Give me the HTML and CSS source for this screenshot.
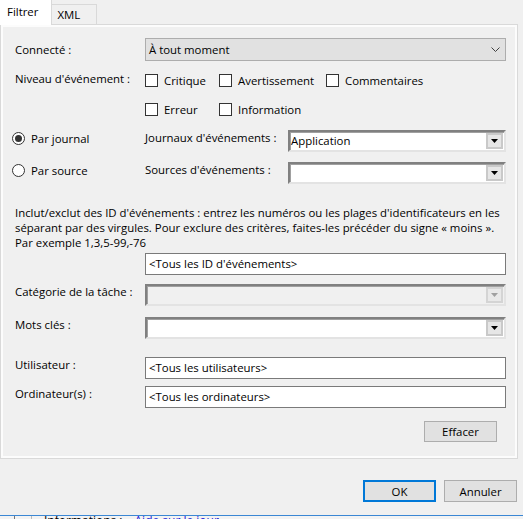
FILE: index.html
```html
<!DOCTYPE html>
<html lang="fr">
<head>
    <meta charset="UTF-8">
    <meta name="viewport" content="width=device-width, initial-scale=1.0">
    <title>Filtrer le journal actuel</title>
    <link rel="stylesheet" href="styles.css">
</head>
<body>
    <div class="dialog">
        <div class="tabs">
            <div class="tab tab-active">Filtrer</div>
            <div class="tab">XML</div>
        </div>

        <div class="tab-panel">
            <div class="page">
                <div class="row row-connect">
                    <span class="field-label">Connecté :</span>
                    <div class="combo-flat">
                        <span>À tout moment</span>
                        <svg class="chevron" width="9" height="5" viewBox="0 0 9 5"><path d="M0.5 0.5 L4.5 4.5 L8.5 0.5" fill="none" stroke="#404040"/></svg>
                    </div>
                </div>

                <div class="row row-levels">
                    <span class="field-label levels-label">Niveau d'événement :</span>
                    <div class="levels">
                        <label class="check"><span class="box"></span>Critique</label>
                        <label class="check"><span class="box"></span>Avertissement</label>
                        <label class="check"><span class="box"></span>Commentaires</label>
                        <label class="check"><span class="box"></span>Erreur</label>
                        <label class="check"><span class="box"></span>Information</label>
                    </div>
                </div>

                <div class="sources">
                    <div class="source-row">
                        <label class="radio"><span class="dot dot-on"></span>Par journal</label>
                        <span class="field-label">Journaux d'événements :</span>
                        <div class="combo">
                            <span class="combo-text">Application</span>
                            <span class="drop"><svg width="7" height="4" viewBox="0 0 7 4"><path d="M0 0h7L3.5 4z" fill="#000"/></svg></span>
                        </div>
                    </div>
                    <div class="source-row">
                        <label class="radio"><span class="dot"></span>Par source</label>
                        <span class="field-label">Sources d'événements :</span>
                        <div class="combo">
                            <span class="combo-text"></span>
                            <span class="drop"><svg width="7" height="4" viewBox="0 0 7 4"><path d="M0 0h7L3.5 4z" fill="#000"/></svg></span>
                        </div>
                    </div>
                </div>

                <p class="hint">Inclut/exclut des ID d'événements : entrez les numéros ou les plages d'identificateurs en les<br>séparant par des virgules. Pour exclure des critères, faites-les précéder du signe « moins ».<br>Par exemple 1,3,5-99,-76</p>

                <div class="row row-ids">
                    <span></span>
                    <div class="textbox">&lt;Tous les ID d'événements&gt;</div>
                </div>

                <div class="row row-category">
                    <span class="field-label">Catégorie de la tâche :</span>
                    <div class="combo combo-disabled">
                        <span class="combo-text"></span>
                        <span class="drop"><svg width="7" height="4" viewBox="0 0 7 4"><path d="M0 0h7L3.5 4z" fill="#a0a0a0"/></svg></span>
                    </div>
                </div>

                <div class="row row-keywords">
                    <span class="field-label">Mots clés :</span>
                    <div class="combo">
                        <span class="combo-text"></span>
                        <span class="drop"><svg width="7" height="4" viewBox="0 0 7 4"><path d="M0 0h7L3.5 4z" fill="#000"/></svg></span>
                    </div>
                </div>

                <div class="row row-user">
                    <span class="field-label">Utilisateur :</span>
                    <div class="textbox">&lt;Tous les utilisateurs&gt;</div>
                </div>

                <div class="row row-computer">
                    <span class="field-label">Ordinateur(s) :</span>
                    <div class="textbox">&lt;Tous les ordinateurs&gt;</div>
                </div>

                <div class="clear-line">
                    <button class="btn">Effacer</button>
                </div>
            </div>
        </div>

        <div class="actions">
            <button class="btn btn-default">OK</button>
            <button class="btn">Annuler</button>
        </div>

        <div class="behind">
            <span class="behind-grip"></span>
            <span class="behind-label">Informations :</span>
            <span class="behind-link">Aide sur le jour</span>
        </div>
    </div>
</body>
</html>
```

FILE: styles.css
```css
* {
    margin: 0;
    padding: 0;
    box-sizing: border-box;
}

body {
    width: 523px;
    height: 519px;
    overflow: hidden;
    background-color: #f0f0f0;
    font-family: 'Open Sans', 'Noto Sans', sans-serif;
    font-size: 11.4px;
    color: #000;
}

.dialog {
    display: flex;
    flex-direction: column;
    height: 519px;
}

/* tab strip */
.tabs {
    display: flex;
    align-items: flex-end;
    height: 24px;
}

.tab {
    height: 20px;
    padding: 0 16px 0 5px;
    line-height: 19px;
    background: #f0f0f0;
    border: 1px solid #d9d9d9;
    border-bottom: none;
    border-left: none;
}

.tab-active {
    position: relative;
    z-index: 1;
    height: 25px;
    margin-bottom: -1px;
    padding: 0 13px 0 7px;
    line-height: 24px;
    background: #fff;
    border-top: none;
}

.tab-panel {
    width: 518px;
    border: 1px solid #d9d9d9;
    background: #fcfcfc;
    padding: 2px;
}

.page {
    background: #f0f0f0;
    padding: 11px 9px 14px 12px;
}

/* label + control rows: labels sit near the top of their control */
.row {
    display: grid;
    grid-template-columns: 130px 1fr;
    align-items: start;
}

.field-label {
    white-space: nowrap;
    line-height: 16px;
}

.row-connect {
    align-items: center;
}

.row-levels {
    margin-top: 9px;
}

.levels-label {
    line-height: 15px;
    padding-top: 1px;
}

.row-ids { margin-top: 3px; }
.row-category { margin-top: 9px; }
.row-keywords { margin-top: 11px; }
.row-user { margin-top: 18px; }
.row-computer { margin-top: 7px; }

.levels {
    display: grid;
    grid-template-columns: 74px 107px auto;
    grid-auto-rows: 20px;
    row-gap: 9px;
}

.check, .radio {
    display: flex;
    align-items: center;
    gap: 6px;
    white-space: nowrap;
}

.radio {
    height: 16px;
}

.box {
    width: 13px;
    height: 13px;
    border: 1px solid #333;
    background: #fff;
}

.sources {
    display: flex;
    flex-direction: column;
    gap: 10px;
    margin: 11px 0 0 -3px;
}

.source-row {
    display: grid;
    grid-template-columns: 133px 143px 1fr;
    align-items: start;
    height: 22px;
}

.dot {
    width: 13px;
    height: 13px;
    border: 1px solid #333;
    border-radius: 50%;
    background: #fff;
    display: flex;
    align-items: center;
    justify-content: center;
}

.dot-on::after {
    content: "";
    width: 7px;
    height: 7px;
    border-radius: 50%;
    background: #333;
}

/* Windows 10 style dropdown */
.combo-flat {
    height: 23px;
    display: flex;
    align-items: center;
    justify-content: space-between;
    padding: 0 3px 0 3px;
    background: #e1e1e1;
    border: 1px solid #adadad;
}

.chevron {
    margin-right: 2px;
}

/* classic sunken combobox */
.combo {
    height: 22px;
    display: flex;
    align-items: stretch;
    background: #fff;
    border: 2px solid;
    border-color: #808080 #e3e3e3 #e3e3e3 #808080;
    box-shadow: inset 1px 1px 0 #a0a0a0;
}

.combo-text {
    flex: 1;
    padding-left: 1px;
    line-height: 17px;
}

.drop {
    width: 17px;
    margin: 1px 1px 1px 0;
    display: flex;
    align-items: center;
    justify-content: center;
    background: #e6e6e6;
    border: 2px solid #c9c9c9;
}

.combo-disabled {
    background: #f0f0f0;
}

.combo-disabled .drop {
    background: #e9e9e9;
    border-color: #d4d4d4;
}

.textbox {
    height: 22px;
    line-height: 20px;
    padding-left: 3px;
    background: #fff;
    border: 1px solid #7a7a7a;
    white-space: nowrap;
}

.hint {
    margin-top: 21px;
    line-height: 15px;
    white-space: nowrap;
}

.clear-line {
    display: flex;
    justify-content: flex-end;
    margin-top: 13px;
    padding-right: 9px;
}

.btn {
    width: 73px;
    height: 21px;
    font-family: inherit;
    font-size: inherit;
    color: #000;
    background: #e1e1e1;
    border: 1px solid #adadad;
}

.actions {
    display: flex;
    justify-content: flex-end;
    gap: 8px;
    margin-top: 21px;
    padding-right: 6px;
}

.actions .btn {
    height: 22px;
}

.btn-default {
    border: 2px solid #0078d7;
}

/* strip of the window underneath */
.behind {
    margin-top: 13px;
    border-top: 1px solid #3b87d4;
    background: #f3f3f3;
    height: 12px;
    display: flex;
    align-items: flex-start;
    gap: 12px;
    padding-left: 14px;
    font-size: 12px;
    line-height: 9px;
    overflow: hidden;
}

.behind-grip {
    width: 18px;
    height: 8px;
    border-left: 1px solid #777;
    border-right: 1px solid #bbb;
}

.behind-label {
    color: #000;
}

.behind-link {
    color: #1a1ad6;
}
```
